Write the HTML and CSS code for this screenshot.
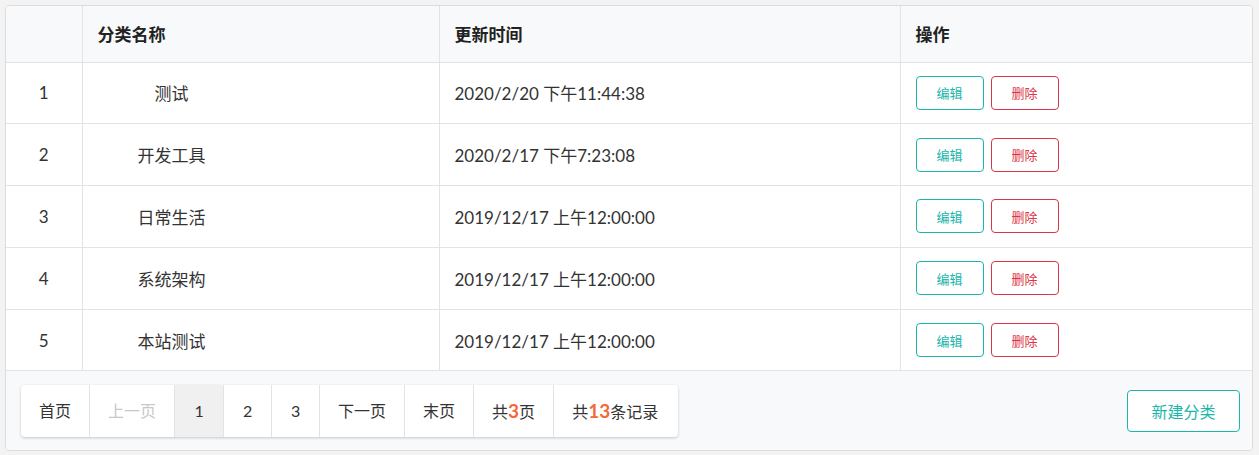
FILE: index.html
```html
<!DOCTYPE html>
<html lang="zh-CN">
<head>
<meta charset="UTF-8">
<meta name="viewport" content="width=device-width, initial-scale=1.0">
<title>分类管理</title>
<link rel="stylesheet" href="styles.css">
</head>
<body>
<div class="panel">
    <table class="list">
        <colgroup>
            <col class="c-no"><col class="c-name"><col class="c-time"><col class="c-op">
        </colgroup>
        <thead>
            <tr><th></th><th>分类名称</th><th>更新时间</th><th>操作</th></tr>
        </thead>
        <tbody>
            <tr>
                <td class="no">1</td>
                <td><span class="name">测试</span></td>
                <td>2020/2/20 下午11:44:38</td>
                <td><button class="btn edit">编辑</button><button class="btn del">删除</button></td>
            </tr>
            <tr>
                <td class="no">2</td>
                <td><span class="name">开发工具</span></td>
                <td>2020/2/17 下午7:23:08</td>
                <td><button class="btn edit">编辑</button><button class="btn del">删除</button></td>
            </tr>
            <tr>
                <td class="no">3</td>
                <td><span class="name">日常生活</span></td>
                <td>2019/12/17 上午12:00:00</td>
                <td><button class="btn edit">编辑</button><button class="btn del">删除</button></td>
            </tr>
            <tr>
                <td class="no">4</td>
                <td><span class="name">系统架构</span></td>
                <td>2019/12/17 上午12:00:00</td>
                <td><button class="btn edit">编辑</button><button class="btn del">删除</button></td>
            </tr>
            <tr>
                <td class="no">5</td>
                <td><span class="name">本站测试</span></td>
                <td>2019/12/17 上午12:00:00</td>
                <td><button class="btn edit">编辑</button><button class="btn del">删除</button></td>
            </tr>
        </tbody>
    </table>
    <div class="foot">
        <div class="pager">
            <a href="#">首页</a>
            <a class="off">上一页</a>
            <a class="num cur">1</a>
            <a class="num" href="#">2</a>
            <a class="num" href="#">3</a>
            <a href="#">下一页</a>
            <a href="#">末页</a>
            <span>共<b>3</b>页</span>
            <span class="total">共<b>13</b>条记录</span>
        </div>
        <button class="btn add">新建分类</button>
    </div>
</div>
</body>
</html>
```

FILE: styles.css
```css
body {
    margin: 0;
    padding: 5px 6px 4px 5px;
    background: #f3f3f3;
    font-family: Lato, "Noto Sans CJK SC", sans-serif;
    font-size: 17px;
    color: #333;
}
.panel {
    background: #fff;
    border: 1px solid #dcdcdc;
    border-radius: 4px;
    overflow: hidden;
}
.list {
    width: 100%;
    border-collapse: collapse;
    table-layout: fixed;
}
.c-no { width: 76px; }
.c-name { width: 357px; }
.c-time { width: 461px; }
.list th {
    background: #f8f9fa;
    height: 55.5px;
    padding: 0 15px;
    text-align: left;
    font-weight: bold;
    color: #222;
    border-bottom: 1px solid #e3e3e3;
    border-left: 1px solid #e3e3e3;
}
.list td {
    height: 60.8px;
    padding: 0 15px;
    border-bottom: 1px solid #e3e3e3;
    border-left: 1px solid #e3e3e3;
}
.list th:first-child, .list td:first-child {
    border-left: none;
}
.list td.no {
    text-align: center;
}
.name {
    display: inline-block;
    width: 148px;
    text-align: center;
}
.btn {
    font-family: Lato, "Noto Sans CJK SC", sans-serif;
    background: #fff;
    border-radius: 4px;
    cursor: pointer;
}
.edit, .del {
    width: 68px;
    height: 34px;
    font-size: 13px;
    margin-right: 7px;
}
.edit {
    border: 1px solid #1ab6ab;
    color: #1ab6ab;
}
.del {
    border: 1px solid #dc3545;
    color: #dc3545;
}
.foot {
    background: #f8f9fa;
    display: flex;
    justify-content: space-between;
    align-items: center;
    padding: 14px 12px 13px 15px;
}
.pager {
    display: flex;
    background: #fff;
    border-radius: 4px;
    box-shadow: 0 1px 3px rgba(0,0,0,0.2);
    overflow: hidden;
    font-size: 16px;
}
.pager a, .pager span {
    height: 52px;
    line-height: 52px;
    padding: 0 18px;
    color: #333;
    text-decoration: none;
    border-left: 1px solid #e3e3e3;
}
.pager a:first-child {
    border-left: none;
}
.pager .num {
    width: 47px;
    padding: 0;
    text-align: center;
}
.pager .off {
    color: #c8c8c8;
}
.pager .cur {
    background: #f0f0f0;
    width: 48px;
}
.pager .total {
    padding-right: 20px;
}
.pager b {
    color: #f4693a;
    font-size: 19px;
}
.add {
    width: 113px;
    height: 42px;
    font-size: 16px;
    border: 1px solid #1ab6ab;
    color: #1ab6ab;
}
```
